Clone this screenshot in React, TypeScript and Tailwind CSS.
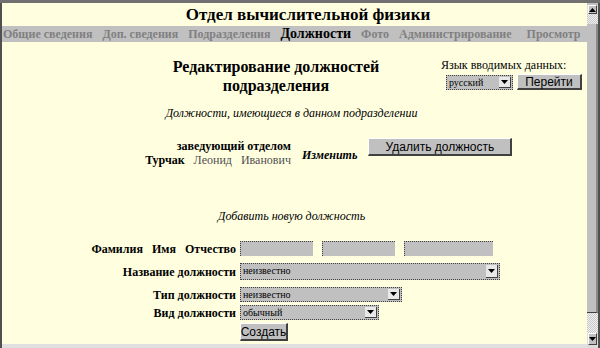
import React from "react";

const serif = "font-['Liberation_Serif','Times_New_Roman',serif]";
const sans = "font-['Liberation_Sans',Arial,sans-serif]";

const navItems = [
	{ label: "Общие сведения", active: false },
	{ label: "Доп. сведения", active: false },
	{ label: "Подразделения", active: false },
	{ label: "Должности", active: true },
	{ label: "Фото", active: false },
	{ label: "Администрирование", active: false },
];

export default function App() {
	return (
		<div className={`w-[600px] h-[348px] overflow-hidden flex flex-col bg-[#6e6e6e] ${serif} text-black`}>
			<div className="h-[3px] shrink-0 bg-[#707070]" />
			<div className="flex flex-1 min-h-0">
				<div className="w-[2px] bg-[#505050]" />
				<main className="w-[585px] bg-[#ffffe0] flex flex-col">
					<div className="h-[23px] flex items-center justify-center pl-[27px] text-[17px] font-bold leading-none">Отдел вычислительной физики</div>
					<nav className="h-[16px] bg-[#c0c0c0] flex items-center pl-[1px] text-[12px] font-bold leading-none text-[#808080] whitespace-nowrap">
						{navItems.map((item) => (
							<span key={item.label} className={`shrink-0 mr-[10px] ${item.active ? "text-black text-[14px]" : ""}`}>
								{item.label}
							</span>
						))}
						<span className="shrink-0 ml-[5px]">Просмотр</span>
					</nav>

					<section className="flex mt-[15px]">
						<div className="w-[436px] pl-[112px] text-center text-[16px] font-bold leading-[19px]">
							Редактирование должностей
							<br />
							подразделения
						</div>
						<div className="flex flex-col pt-[1px] pl-[3px]">
							<div className="text-[12px] leading-[14px]">Язык вводимых данных:</div>
							<div className="flex items-center mt-[2px] ml-[5px]">
								<Select value="русский" width="w-[67px]" />
								<Button className="ml-[4px] w-[65px] h-[16px]">Перейти</Button>
							</div>
						</div>
					</section>

					<p className="mt-[11px] text-center italic text-[12px] leading-[14px] pr-[6px]">Должности, имеющиеся в данном подразделении</p>

					<section className="flex mt-[19px]">
						<div className="w-[289px] text-right text-[12px] leading-[14px]">
							<div className="font-bold">заведующий отделом</div>
							<div>
								<b>Турчак</b>
								<span className="text-[#505050]">&nbsp;&nbsp; Леонид &nbsp;&nbsp;Иванович</span>
							</div>
						</div>
						<div className="ml-[11px] self-center italic font-bold text-[12px] leading-[14px] mt-[4px]">Изменить</div>
						<Button className="ml-[11px] w-[144px] h-[18px] self-start -mt-[1px]">Удалить должность</Button>
					</section>

					<p className="mt-[42px] text-center italic text-[12px] leading-[14px] pr-[6px]">Добавить новую должность</p>

					<section className="grid grid-cols-[234px_1fr] gap-x-[4px] mt-[18px] text-[12px] font-bold leading-[14px]">
						<div className="text-right self-end">Фамилия&nbsp;&nbsp; Имя&nbsp;&nbsp; Отчество</div>
						<div className="flex gap-[9px]">
							<Input width="w-[73px]" />
							<Input width="w-[73px]" />
							<Input width="w-[89px]" />
						</div>

						<div className="text-right self-center mt-[7px]">Название должности</div>
						<div className="mt-[7px]">
							<Select value="неизвестно" width="w-[260px]" tall />
						</div>

						<div className="text-right self-center mt-[7px]">Тип должности</div>
						<div className="mt-[7px]">
							<Select value="неизвестно" width="w-[162px]" />
						</div>

						<div className="text-right self-center mt-[3px]">Вид должности</div>
						<div className="mt-[3px]">
							<Select value="обычный" width="w-[139px]" />
						</div>

						<div />
						<div className="mt-[3px]">
							<Button className="w-[48px] h-[18px]">Создать</Button>
						</div>
					</section>

					<div className="flex-1" />
					<div className="h-[4px] bg-[#e0e0e0]" />
				</main>
				<Scrollbar />
			</div>
		</div>
	);
}

function Button({ children, className = "" }: Readonly<{ children: React.ReactNode; className?: string }>) {
	return (
		<div
			className={`${sans} flex items-center justify-center bg-[#c0c0c0] border-t border-l border-white border-r-2 border-b-2 border-r-[#404040] border-b-[#404040] text-[12px] leading-none text-black font-normal not-italic ${className}`}
		>
			{children}
		</div>
	);
}

function Select({ value, width, tall }: Readonly<{ value: string; width: string; tall?: boolean }>) {
	return (
		<div className={`${width} ${tall ? "h-[17px]" : "h-[15px]"} flex bg-[#c0c0c0] border border-[#404040] border-dotted font-normal`}>
			<span className="pl-[2px] text-[10px] leading-[13px] text-black">{value}</span>
			<span className="ml-auto w-[12px] my-[1px] mr-[1px] flex items-center justify-center bg-[#e8e8e8] border-r border-b border-[#404040]">
				<svg width="7" height="4" viewBox="0 0 7 4">
					<path d="M0 0h7L3.5 4z" fill="#000" />
				</svg>
			</span>
		</div>
	);
}

function Input({ width }: Readonly<{ width: string }>) {
	return <div className={`${width} h-[15px] bg-[#c0c0c0] border-t border-l border-[#404040] border-dotted`} />;
}

function Scrollbar() {
	return (
		<div className="w-[13px] flex flex-col bg-[#dcdcdc] border-r-2 border-[#505050]">
			<div className="h-[2px] bg-[#c0c0c0]" />
			<div className="h-[9px] mx-[1px] flex items-center justify-center bg-[#c0c0c0] border-t border-l border-white border-r border-b border-r-[#404040] border-b-[#404040]">
				<svg width="7" height="4" viewBox="0 0 7 4">
					<path d="M0 4h7L3.5 0z" fill="#000" />
				</svg>
			</div>
			<div className="h-[10px] bg-[repeating-conic-gradient(#f0f0f0_0_25%,#c8c8c8_0_50%)] bg-[length:2px_2px]" />
			<div className="flex-1 bg-[#c0c0c0] border-r-2 border-[#8a8a8a] border-b border-b-[#404040]" />
			<div className="h-[20px] bg-[repeating-conic-gradient(#f0f0f0_0_25%,#c8c8c8_0_50%)] bg-[length:2px_2px]" />
			<div className="h-[12px] mx-[1px] mb-[3px] flex items-center justify-center bg-[#c0c0c0] border-t border-l border-white border-r border-b border-r-[#404040] border-b-[#404040]">
				<svg width="7" height="4" viewBox="0 0 7 4">
					<path d="M0 0h7L3.5 4z" fill="#000" />
				</svg>
			</div>
		</div>
	);
}
